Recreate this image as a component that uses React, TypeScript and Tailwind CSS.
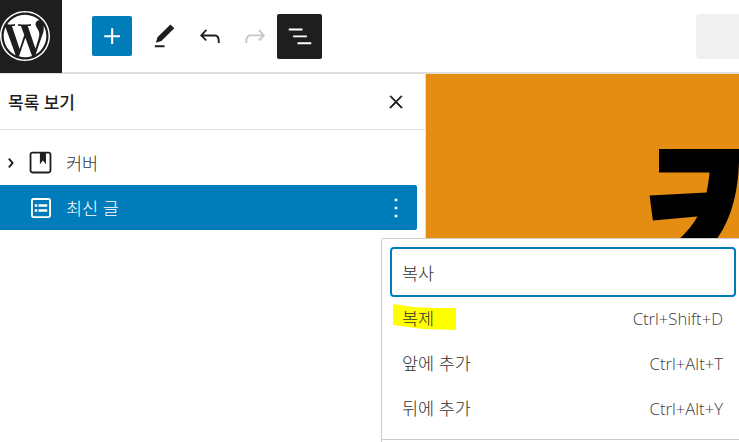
import React from "react";

const Ic = ({ d, size = 30, className = "" }: { d: string; size?: number; className?: string }) => (
  <svg viewBox="0 0 24 24" width={size} height={size} fill="currentColor" className={`shrink-0 ${className}`}>
    <path d={d} />
  </svg>
);

const WP = () => (
  <svg viewBox="0 0 80 80" width="50" height="50" fill="#fff">
    <path d="M40 0C17.9 0 0 17.9 0 40s17.9 40 40 40 40-17.9 40-40S62.1 0 40 0zm0 2.4c20.8 0 37.6 16.8 37.6 37.6S60.8 77.6 40 77.6 2.4 60.8 2.4 40 19.2 2.4 40 2.4z" />
    <path d="M5.9 40c0 13.5 7.8 25.2 19.2 30.7L8.8 26.1C6.9 30.3 5.9 35 5.9 40zm57.1-1.7c0-4.2-1.5-7.1-2.8-9.4-1.7-2.8-3.3-5.2-3.3-8 0-3.1 2.4-6.1 5.8-6.1h.4C57 9.2 48.9 5.9 40 5.9c-11.9 0-22.4 6.1-28.5 15.4.8 0 1.6 0 2.2.1 3.6 0 9.1-.4 9.1-.4 1.8-.1 2.1 2.6.2 2.8 0 0-1.9.2-3.9.3l12.3 36.7 7.4-22.3-5.3-14.4c-1.8-.1-3.5-.3-3.5-.3-1.8-.1-1.6-2.9.2-2.8 0 0 5.6.4 8.9.4 3.6 0 9.1-.4 9.1-.4 1.8-.1 2.1 2.6.2 2.8 0 0-1.9.2-3.9.3l12.2 36.4 3.4-11.3c1.5-4.7 2.6-8.1 2.6-11zM40.6 42.9 30.4 72.5c3 .9 6.3 1.4 9.6 1.4 4 0 7.8-.7 11.3-1.9-.1-.1-.2-.3-.2-.5L40.6 42.9zm29.2-19.3c.1 1.1.2 2.3.2 3.5 0 3.5-.6 7.3-2.6 12.1L57 69.7C67.4 63.6 74.1 52.6 74.1 40c0-6-1.5-11.6-4.3-16.4z" />
  </svg>
);

const Row = ({ label, keys, highlight }: { label: string; keys: string; highlight?: boolean }) => (
  <div className="relative flex h-[45px] items-center justify-between pl-[12px] pr-[13px] text-[#333]">
    {highlight && (
      <svg className="absolute left-[3px] top-[8px]" width="65" height="28">
        <polygon points="0,0 20,3 40,4 63,4 63,26 30,25 0,21" fill="#ffff00" />
      </svg>
    )}
    <span className="relative">{label}</span>
    <span className="text-[16.7px] text-[#3c3c3c]">{keys}</span>
  </div>
);

export default function App() {
  return (
    <div className="relative h-[442px] w-[739px] overflow-hidden bg-white font-['Open_Sans','Noto_Sans_CJK_KR',sans-serif] text-[17.5px] font-light text-[#1e1e1e]">
      <header className="flex h-[74px] items-center border-b-2 border-[#dedede] bg-white">
        <div className="flex h-[73px] w-[62px] shrink-0 items-center bg-[#1e1e1e]">
          <WP />
        </div>
        <div className="ml-[30px] flex h-10 w-10 items-center justify-center rounded-[2px] bg-[#007cba] text-white">
          <Ic size={33} d="M11 12.5V17.5H12.5V12.5H17.5V11H12.5V6H11V11H6V12.5H11Z" />
        </div>
        <Ic className="ml-[18px]" size={29} d="M20.1 5.1L16.9 2 6.2 12.7l-1.3 4.4 4.5-1.3L20.1 5.1zM4 20.8h8v-1.5H4v1.5z" />
        <Ic className="ml-[16px]" d="M18.3 11.7c-.6-.6-1.4-.9-2.3-.9H6.7l2.9-3.3-1.1-1-4.5 5L8.5 16l1-1-2.7-2.7H16c.5 0 .9.2 1.3.5 1 1 1 3.4 1 4.5v.3h1.5v-.2c0-1.5 0-4.3-1.5-5.7z" />
        <Ic className="ml-[15px] text-[#c8c8c8]" d="M15.6 6.5l-1.1 1 2.9 3.3H8c-.9 0-1.7.3-2.3.9-1.4 1.5-1.4 4.2-1.4 5.6v.2h1.5v-.3c0-1.1 0-3.5 1-4.5.3-.3.7-.5 1.3-.5h9.2L14.5 15l1.1 1.1 4.6-4.6-4.6-5z" />
        <div className="ml-[7px] flex h-[45px] w-[45px] items-center justify-center rounded-[2px] bg-[#1e1e1e] text-white">
          <Ic d="M3 6h11v1.5H3V6Zm3.5 5.5h11V13h-11v-1.5ZM21 17H10v1.5h11V17Z" />
        </div>
        <div className="ml-auto h-[45px] w-[43px] rounded-l-[4px] bg-[#f0f0f0]" />
      </header>

      <div className="flex h-[368px]">
        <aside className="w-[426px] shrink-0 border-r border-[#e0e0e0]">
          <div className="flex h-[56px] items-center justify-between border-b border-[#dedede] pl-2 pr-[19px]">
            <span className="pt-[2px] text-[17px] font-medium text-[#1e1e1e]">목록 보기</span>
            <Ic size={20} d="M13 11.8l6.1-6.3-1-1-6.1 6.2-6.1-6.2-1 1 6.1 6.3-6.5 6.7 1 1 6.5-6.6 6.5 6.6 1-1z" className="stroke-current stroke-1" />
          </div>
          <div className="flex h-[55px] w-[417px] items-end">
            <div className="flex h-[45px] items-center">
              <Ic className="-ml-[4px]" d="M10.8622 8.04053L14.2805 12.0286L10.8622 16.0167L9.72327 15.0405L12.3049 12.0286L9.72327 9.01672L10.8622 8.04053Z" />
              <Ic size={29} d="M18.7 3H5.3C4 3 3 4 3 5.3v13.4C3 20 4 21 5.3 21h13.4c1.3 0 2.3-1 2.3-2.3V5.3C21 4 20 3 18.7 3zm.8 15.7c0 .4-.4.8-.8.8H5.3c-.4 0-.8-.4-.8-.8V5.3c0-.4.4-.8.8-.8h6.2v8.9l2.5-3.1 2.5 3.1V4.5h2.2c.4 0 .8.4.8.8v13.4z" />
              <span className="ml-[11px] pt-[2px] text-[#333]">커버</span>
            </div>
          </div>
          <div className="flex h-[45px] w-[417px] items-center rounded-r-[2px] bg-[#007cba] pl-[26px] pr-[5px] text-white">
            <Ic d="M18 4H6c-1.1 0-2 .9-2 2v12c0 1.1.9 2 2 2h12c1.1 0 2-.9 2-2V6c0-1.1-.9-2-2-2zm.5 14c0 .3-.2.5-.5.5H6c-.3 0-.5-.2-.5-.5V6c0-.3.2-.5.5-.5h12c.3 0 .5.2.5.5v12zM7 11h2V9H7v2zm0 4h2v-2H7v2zm3-4h7V9h-7v2zm0 4h7v-2h-7v2z" />
            <span className="ml-[10px] pt-[2px]">최신 글</span>
            <Ic className="ml-auto" size={32} d="M13 19h-2v-2h2v2zm0-6h-2v-2h2v2zm0-6h-2V5h2v2z" />
          </div>
        </aside>
        <main className="relative h-[164px] flex-1 overflow-hidden bg-[#e58c13]">
          <div className="absolute left-[218px] top-[52px] whitespace-nowrap text-[185px] font-black leading-none text-black">커버</div>
        </main>
      </div>

      <div className="absolute left-[381px] top-[238px] h-[210px] w-[380px] rounded-[2px] border border-[#ccc] bg-white pl-[8px] pt-[8px]">
        <div className="w-[346px]">
          <div className="mb-[-1px] flex h-[50px] items-center rounded-[4px] border-2 border-[#007cba] pl-[10px] pt-[3px] text-[#333]">복사</div>
          <Row label="복제" keys="Ctrl+Shift+D" highlight />
          <Row label="앞에 추가" keys="Ctrl+Alt+T" />
          <Row label="뒤에 추가" keys="Ctrl+Alt+Y" />
        </div>
        <div className="absolute left-0 right-0 top-[200px] border-t border-[#ccc]" />
      </div>
    </div>
  );
}
